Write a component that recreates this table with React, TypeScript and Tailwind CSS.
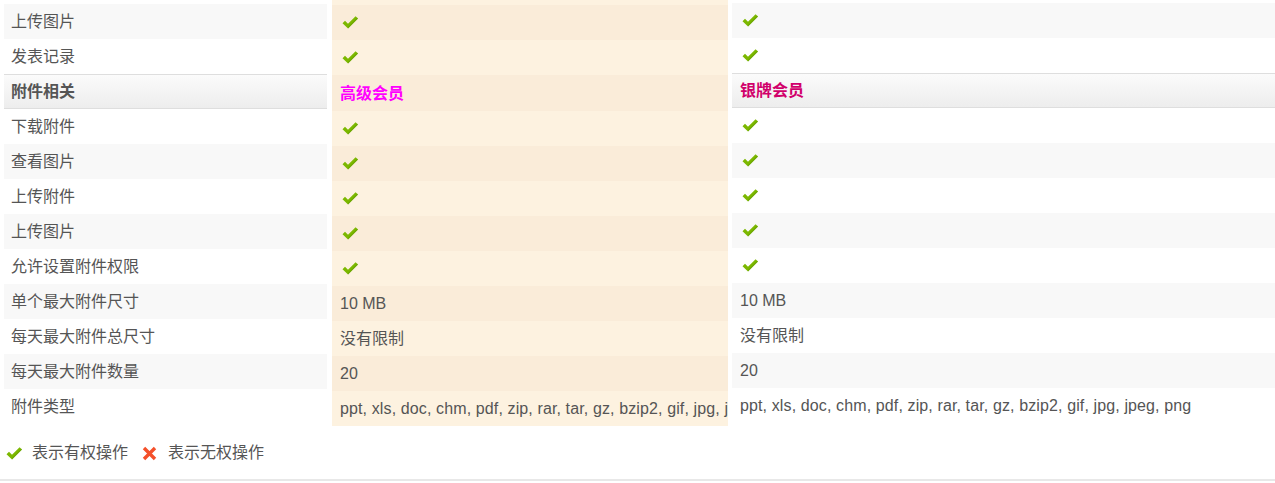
import React from "react";

const Check = ({ className = "" }: { className?: string }) => (
  <svg width="18" height="15" viewBox="0 0 18 15" className={className}>
    <path d="M1.5 8.2 L4 5.8 L7 8.8 L14.6 1.2 L17 3.6 L7 13.6 Z" fill="#7cb800" />
    <path d="M7 13.6 L17 3.6 L16.2 2.8 L7 12 Z" fill="#5e9a00" opacity="0.6" />
  </svg>
);

const Cross = () => (
  <svg width="15" height="15" viewBox="0 0 15 15">
    <path d="M2 2 L13 13 M13 2 L2 13" stroke="#f4502a" strokeWidth="3.4" strokeLinecap="butt" />
  </svg>
);

type Row = { label: string; m: string; r: string; header?: boolean };

const types = "ppt, xls, doc, chm, pdf, zip, rar, tar, gz, bzip2, gif, jpg, jpeg, png";

const rows: Row[] = [
  { label: "上传图片", m: "check", r: "check" },
  { label: "发表记录", m: "check", r: "check" },
  { label: "附件相关", m: "高级会员", r: "银牌会员", header: true },
  { label: "下载附件", m: "check", r: "check" },
  { label: "查看图片", m: "check", r: "check" },
  { label: "上传附件", m: "check", r: "check" },
  { label: "上传图片", m: "check", r: "check" },
  { label: "允许设置附件权限", m: "check", r: "check" },
  { label: "单个最大附件尺寸", m: "10 MB", r: "10 MB" },
  { label: "每天最大附件总尺寸", m: "没有限制", r: "没有限制" },
  { label: "每天最大附件数量", m: "20", r: "20" },
  { label: "附件类型", m: types, r: types },
];

const renderVal = (v: string) =>
  v === "check" ? (
    <Check className="ml-[1px]" />
  ) : v === types ? (
    <span className="tracking-[0.12px]">{v}</span>
  ) : (
    v
  );

export default function App() {
  return (
    <div
      className="w-[1275px] h-[483px] bg-white text-[16px] text-[#555] overflow-hidden"
      style={{ fontFamily: '"Liberation Sans", "Noto Sans CJK SC", sans-serif' }}
    >
      <div className="flex items-start pl-[4px]">
        {/* left column */}
        <div className="w-[323px] mt-[4px] flex flex-col">
          {rows.map((row, i) =>
            row.header ? (
              <div
                key={i}
                className="h-[35px] flex items-center pl-[7px] font-bold text-[#555] border-t border-b border-[#dedede] bg-gradient-to-b from-[#fbfbfb] to-[#ededed]"
              >
                {row.label}
              </div>
            ) : (
              <div
                key={i}
                className={`h-[35px] flex items-center pl-[7px] ${i % 2 === 0 ? "bg-[#f8f8f8]" : "bg-white"}`}
              >
                {row.label}
              </div>
            )
          )}
        </div>

        {/* middle column */}
        <div className="w-[396px] ml-[5px] pt-[5px] bg-[#fdf2e0] flex flex-col overflow-hidden">
          {rows.map((row, i) => (
            <div
              key={i}
              className={`${i === 2 ? "h-[36px]" : "h-[35px]"} flex items-center pl-[8px] whitespace-nowrap overflow-hidden ${
                i % 2 === 0 ? "bg-[#faecd9]" : "bg-[#fdf2e0]"
              } ${row.header ? "font-bold text-[#ff00ff] pt-[1px]" : ""}`}
            >
              {renderVal(row.m)}
            </div>
          ))}
        </div>

        {/* right column */}
        <div className="flex-1 ml-[4px] mt-[3px] flex flex-col">
          {rows.map((row, i) =>
            row.header ? (
              <div
                key={i}
                className="h-[35px] flex items-center pl-[8px] font-bold text-[#d1006b] border-t border-b border-[#dedede] bg-gradient-to-b from-[#fbfbfb] to-[#ededed]"
              >
                {row.r}
              </div>
            ) : (
              <div
                key={i}
                className={`h-[35px] flex items-center pl-[8px] whitespace-nowrap ${i % 2 === 0 ? "bg-[#f8f8f8]" : "bg-white"}`}
              >
                {renderVal(row.r)}
              </div>
            )
          )}
        </div>
      </div>

      {/* legend */}
      <div className="flex items-center h-[28px] mt-[13px] pl-[5px]">
        <Check />
        <span className="ml-[9px]">表示有权操作</span>
        <span className="ml-[14px]">
          <Cross />
        </span>
        <span className="ml-[11px]">表示无权操作</span>
      </div>
      <div className="mt-[12px] h-[2px] bg-[#e8e8e8]" />
    </div>
  );
}
